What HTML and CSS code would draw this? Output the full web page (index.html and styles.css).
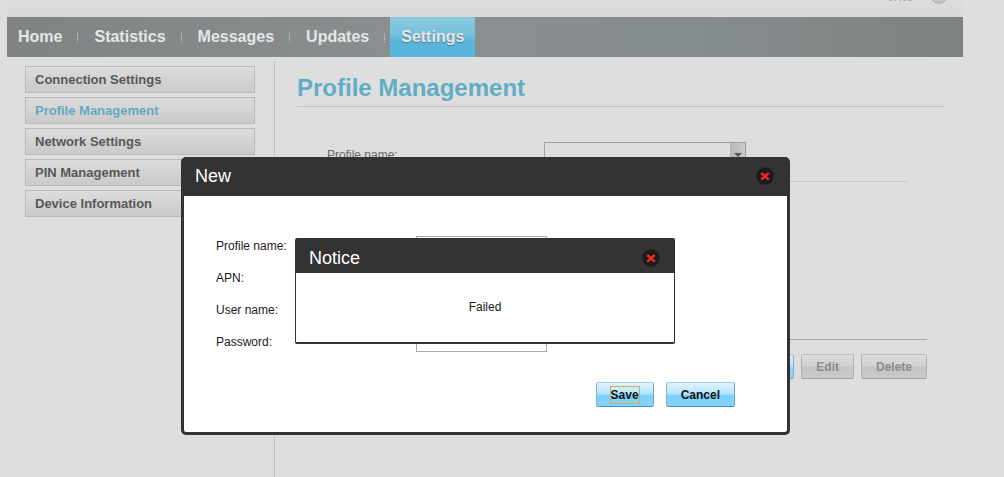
FILE: index.html
```html
<!DOCTYPE html>
<html lang="en">
<head>
<meta charset="utf-8">
<title>Profile Management</title>
<link rel="stylesheet" href="styles.css">
</head>
<body>
<div class="page">
  <header class="topbar">
    <svg class="topbar-mark" width="26" height="2" viewBox="0 0 26 2" aria-hidden="true"><path d="M1 .5h3M6 .5h2M11 .5h2M15 .5h3M20 .5h4" stroke="#b4b4b4" stroke-width="1"/></svg>
    <svg class="topbar-globe" width="18" height="4" viewBox="0 14 18 4" aria-hidden="true"><circle cx="9" cy="9" r="8" fill="#d4d4d4" stroke="#b4b4b4" stroke-width="1.4"/><path d="M9 1v16M9 1c-6 4-6 12 0 16M9 1c6 4 6 12 0 16M2 13.5h14" fill="none" stroke="#b4b4b4"/></svg>
  </header>
  <nav class="nav">
    <a class="nav-link" href="#">Home</a><span class="nav-sep"></span>
    <a class="nav-link" href="#">Statistics</a><span class="nav-sep"></span>
    <a class="nav-link" href="#">Messages</a><span class="nav-sep"></span>
    <a class="nav-link" href="#">Updates</a><span class="nav-sep"></span>
    <a class="nav-link nav-link-active" href="#">Settings</a>
  </nav>
  <div class="columns">
    <aside class="sidebar">
      <a class="side-link" href="#">Connection Settings</a>
      <a class="side-link side-link-active" href="#">Profile Management</a>
      <a class="side-link" href="#">Network Settings</a>
      <a class="side-link" href="#">PIN Management</a>
      <a class="side-link" href="#">Device Information</a>
    </aside>
    <main class="content">
      <h1 class="title">Profile Management</h1>
      <div class="profile-row">
        <label class="profile-label" for="profile">Profile name:</label>
        <span class="select-box">
          <select class="select" id="profile"><option></option></select>
          <span class="select-arrow"><svg width="8" height="4" viewBox="0 0 8 4" aria-hidden="true"><path d="M0 0h8L4 4z" fill="#555"/></svg></span>
        </span>
      </div>
      <div class="details"></div>
      <div class="actions">
        <button class="button button-primary button-dim" type="button" aria-label="New profile"></button>
        <button class="button button-muted" type="button" disabled>Edit</button>
        <button class="button button-muted" type="button" disabled>Delete</button>
      </div>
    </main>
  </div>
</div>

<div class="overlay">
  <section class="dialog" role="dialog" aria-labelledby="new-title">
    <header class="dialog-head">
      <h2 class="dialog-title" id="new-title">New</h2>
      <button class="close" type="button" aria-label="Close"><svg width="18" height="18" viewBox="0 0 18 18"><circle cx="9" cy="9" r="8.7" fill="#1b1b1b"/><path d="M5.2 6l7.6 6.6M12.8 6l-7.6 6.6" stroke="#f5262b" stroke-width="2.4"/></svg></button>
    </header>
    <form class="form">
      <div class="field"><label class="field-label" for="name">Profile name:</label><input class="input" id="name" type="text"></div>
      <div class="field"><label class="field-label" for="apn">APN:</label><input class="input" id="apn" type="text"></div>
      <div class="field"><label class="field-label" for="user">User name:</label><input class="input" id="user" type="text"></div>
      <div class="field"><label class="field-label" for="pass">Password:</label><input class="input" id="pass" type="password"></div>
      <div class="form-actions">
        <button class="button button-primary" type="button"><span class="focus-mark">Save</span></button>
        <button class="button button-primary" type="button">Cancel</button>
      </div>
    </form>
  </section>
</div>

<div class="overlay overlay-notice">
  <section class="notice" role="alertdialog" aria-labelledby="notice-title">
    <header class="dialog-head notice-head">
      <h2 class="dialog-title" id="notice-title">Notice</h2>
      <button class="close" type="button" aria-label="Close"><svg width="18" height="18" viewBox="0 0 18 18"><circle cx="9" cy="9" r="8.7" fill="#1b1b1b"/><path d="M5.2 6l7.6 6.6M12.8 6l-7.6 6.6" stroke="#f5262b" stroke-width="2.4"/></svg></button>
    </header>
    <p class="notice-text">Failed</p>
  </section>
</div>
</body>
</html>
```
FILE: styles.css
```css
* { box-sizing: border-box; }

body {
  margin: 0;
  background: #dedede;
  color: #1a1a1a;
  font: 12px/16px "Liberation Sans", Arial, sans-serif;
}

.page {
  display: flex;
  flex-direction: column;
  min-height: 100vh;
  margin: 0 41px 0 7px;
}

.topbar {
  display: flex;
  justify-content: flex-end;
  align-items: flex-start;
  gap: 16px;
  height: 17px;
  padding-right: 15px;
  background: linear-gradient(#dddddd, #d9d9d9);
}

.nav {
  display: flex;
  height: 40px;
  background: linear-gradient(90deg, #7f8483, #8a8f91 45%, #868d8f 70%, #7e8381);
}

.nav-link {
  padding: 0 11px;
  color: #e6e6e6;
  font-size: 16px;
  font-weight: bold;
  line-height: 40px;
  text-decoration: none;
}

.nav-link-active {
  background: linear-gradient(#8bcbe0, #74c0dc 45%, #5ab4d9 60%, #58b6dc);
  text-shadow: 0 1px 1px #5a7684;
}

.nav-sep {
  width: 1px;
  height: 9px;
  margin: 16px 5px 0 4px;
  background: repeating-linear-gradient(#d0d3d3 0 1px, #858a8b 1px 2px);
}

.columns {
  display: flex;
  flex: 1;
  padding-top: 4px;
}

.sidebar {
  display: flex;
  flex: none;
  flex-direction: column;
  gap: 4px;
  width: 268px;
  padding: 5px 19px 0 18px;
  border-right: 1px solid #c0c0c0;
}

.side-link {
  padding: 0 9px;
  border: 1px solid #b9b9b9;
  background: linear-gradient(#dcdcdc, #cacaca);
  color: #585858;
  font-size: 13px;
  font-weight: bold;
  line-height: 25px;
  text-decoration: none;
}

.side-link-active { color: #64a9c0; }

.content {
  flex: 1;
  padding: 11px 18px 0 22px;
}

.title {
  margin: 0;
  padding-bottom: 2px;
  border-bottom: 1px solid #c4c4c4;
  color: #62adc6;
  font-size: 24px;
  line-height: 32px;
}

.profile-row {
  display: flex;
  height: 75px;
  margin: 0 38px 0 30px;
  padding-top: 35px;
  border-bottom: 1px solid #c6c6c6;
  color: #666;
}

.profile-label {
  width: 217px;
  padding-top: 5px;
}

.select-box {
  display: grid;
  width: 202px;
  height: 25px;
}

.select,
.select-arrow { grid-area: 1 / 1; }

.select {
  border: 1px solid #a0a0a0;
  border-radius: 0;
  background: #dedede;
  appearance: none;
}

.select-arrow {
  display: grid;
  justify-self: end;
  place-items: center;
  width: 16px;
  border: 1px solid #a0a0a0;
  border-left: 0;
  background: linear-gradient(90deg, #b5b5b5, #cbcbcb);
  pointer-events: none;
}

.details {
  height: 158px;
  margin-right: 18px;
  border-bottom: 1px solid #a8a8a8;
}

.actions {
  display: flex;
  justify-content: flex-end;
  gap: 7px;
  margin-right: 18px;
  padding-top: 14px;
}

.button {
  height: 25px;
  padding: 0 14px;
  border: 1px solid;
  border-radius: 2px;
  font: bold 12px/16px "Liberation Sans", Arial, sans-serif;
}

.button-primary {
  border-color: #a5cfe8 #6aa5cb #4b8fbf #7fb2d3;
  background: linear-gradient(#e0f4fe, #b9e5fc 45%, #7dd0fa 55%, #86d5fb);
  color: #111;
}

.button-dim {
  width: 58px;
  opacity: 0.8;
}

.button-muted {
  border-color: #bcbcbc #b2b2b2 #a2a2a2 #b2b2b2;
  background: linear-gradient(#dadada, #d2d2d2 45%, #c5c5c5 55%, #cacaca);
  color: #8c8c8c;
}

.overlay {
  position: fixed;
  inset: 0 34px 0 0;
  display: flex;
  justify-content: center;
  align-items: flex-start;
  padding: 157px 0 0 1px;
}

.overlay-notice { padding: 238px 0 0; }

.dialog {
  width: 609px;
  border: 3px solid #333;
  border-top: 0;
  border-radius: 5px;
  background: #fff;
}

.dialog-head {
  display: flex;
  justify-content: space-between;
  align-items: center;
  height: 39px;
  padding: 0 13px 2px 11px;
  background: #333;
}

.dialog-title {
  margin: 0;
  color: #fff;
  font-size: 18px;
  font-weight: normal;
  line-height: 24px;
}

.close {
  display: flex;
  padding: 0;
  border: 0;
  background: none;
}

.form {
  display: flex;
  flex-direction: column;
  gap: 10px;
  padding: 39px 52px 25px 32px;
}

.field {
  display: flex;
  align-items: center;
  height: 22px;
}

.field-label { width: 200px; }

.input {
  width: 131px;
  height: 20px;
  border: 1px solid #a9a9a9;
  background: #fff;
}

.form-actions {
  display: flex;
  justify-content: flex-end;
  gap: 12px;
  padding-top: 19px;
}

.focus-mark {
  display: block;
  box-shadow: 0 0 0 1px #c9b25e;
}

.notice {
  width: 380px;
  border: 1px solid #333;
  border-bottom-width: 2px;
  border-radius: 2px;
  background: #fff;
}

.notice-head {
  height: 34px;
  padding: 4px 14px 0 13px;
}

.notice-text {
  margin: 0;
  padding: 26px 0 27px;
  text-align: center;
}
```
